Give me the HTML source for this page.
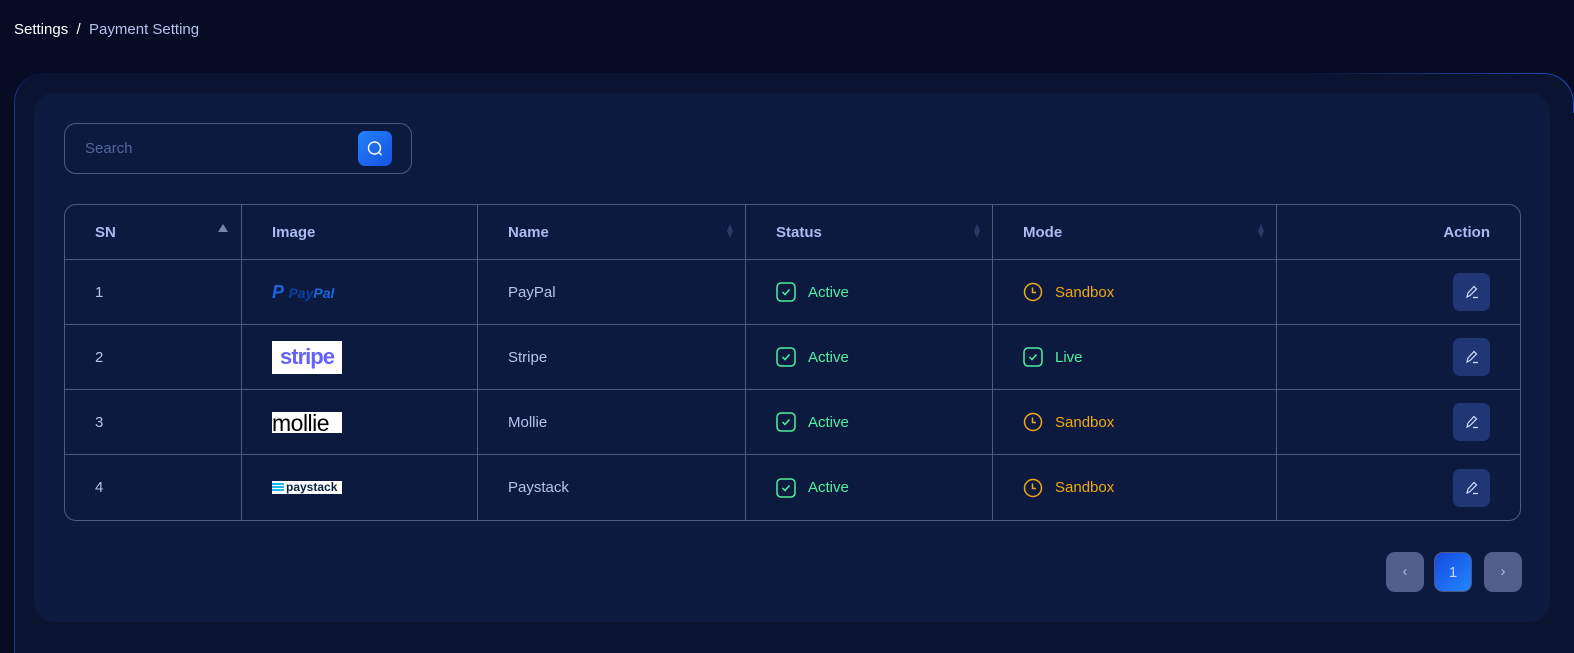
<!DOCTYPE html>
<html><head><meta charset="utf-8"><style>
*{box-sizing:border-box;margin:0;padding:0}
html,body{width:1574px;height:653px;overflow:hidden}
body{background:#050c24;font-family:"Liberation Sans",sans-serif;position:relative}
.bc{position:absolute;left:14px;top:21px;font-size:15px;color:#fff}
.bc span{color:#b4c2ec}
.outer{position:absolute;left:14px;top:73px;width:1560px;height:580px;background:#0a1330;border-top-left-radius:30px;border-top-right-radius:30px;border-left:1px solid #1a3690}
.tr{position:absolute;left:1300px;top:73px;width:274px;height:40px;border-top:1px solid #2050c0;border-right:1px solid #2050c0;border-top-right-radius:30px;-webkit-mask:linear-gradient(90deg,transparent,#000);mask:linear-gradient(90deg,transparent,#000)}
.card{position:absolute;left:34px;top:93px;width:1516px;height:529px;background:#0d1a40;border-radius:20px}
.search{position:absolute;left:64px;top:123px;width:348px;height:51px;border:1px solid #4b5b86;border-radius:12px}
.search .ph{position:absolute;left:20px;top:16px;font-size:15px;color:#52659a}
.search .btn{position:absolute;left:293px;top:7px;width:34px;height:35px;border-radius:7px;background:linear-gradient(135deg,#2480ff,#1652e0)}
table{position:absolute;left:64px;top:204px;width:1457px;border-collapse:separate;border-spacing:0;border:1px solid #4b5b86;border-radius:12px;font-size:15px;color:#b4c2ec}
td,th{border-right:1px solid #4b5b86;border-bottom:1px solid #4b5b86;padding:0 30px;text-align:left;position:relative}
th{height:55px;font-weight:bold;color:#a9bbf0}
td{height:65px}
tr:last-child td{border-bottom:none}
td:last-child,th:last-child{border-right:none;text-align:right;padding-right:30px}
.srt{position:absolute;right:12px;top:19px;width:6px;height:14px;background:#2a3a66;clip-path:polygon(50% 0,100% 50%,50% 100%,0 50%)}
.up{position:absolute;right:13px;top:19px;width:0;height:0;border-left:5px solid transparent;border-right:5px solid transparent;border-bottom:8px solid #7886ad}
.st{display:flex;align-items:center;gap:12px}
.g{color:#4ef0a0}.o{color:#f0a812}
.ed{display:inline-block;width:37px;height:38px;border-radius:7px;background:#213675;vertical-align:middle;padding-top:11px;text-align:center}
.pg{position:absolute;top:552px;width:38px;height:40px;border-radius:9px;background:#505e8a;color:#a9bbf0;text-align:center;line-height:40px;font-size:15px}
</style></head><body>
<div class="bc">Settings &nbsp;/ &nbsp;<span>Payment Setting</span></div>
<div class="outer"></div>
<div class="tr"></div>
<div class="card"></div>
<div class="search"><div class="ph">Search</div><div class="btn"><svg width="34" height="35" viewBox="0 0 34 35"><circle cx="16.5" cy="17" r="6" fill="none" stroke="#fff" stroke-width="1.4"/><path d="M21 21.5l2.5 2.5" stroke="#fff" stroke-width="1.4"/></svg></div></div>
<table>
<tr><th style="width:177px">SN<span class="up"></span></th><th style="width:236px">Image</th><th style="width:268px">Name<span class="srt"></span></th><th style="width:247px">Status<span class="srt"></span></th><th style="width:284px">Mode<span class="srt"></span></th><th>Action</th></tr>
<tr><td>1</td><td><span style="color:#0d3fa0;font-weight:bold;font-style:italic;font-size:16px"><span style="color:#1a66e0;font-size:18px">P</span> <span style="font-size:14px">Pay<b style="color:#1a66e0">Pal</b></span></span></td><td>PayPal</td><td><div class="st g"><svg width="20" height="20"><rect x="1" y="1" width="18" height="18" rx="4" fill="none" stroke="#4ef0a0" stroke-width="1.5"/><path d="M6.5 10l2.5 2.5 4.5-5" fill="none" stroke="#4ef0a0" stroke-width="1.5"/></svg>Active</div></td><td><div class="st o"><svg width="20" height="20"><circle cx="10" cy="10" r="8.5" fill="none" stroke="#f0a812" stroke-width="1.5"/><path d="M9.5 5.5v5h3.5" fill="none" stroke="#f0a812" stroke-width="1.5"/></svg>Sandbox</div></td><td><span class="ed"><svg width="16" height="16"><path d="M3 13l1-4 6-6.5 2.5 2.5-6.5 6.5z M9 13.5h5" fill="none" stroke="#d8e0ff" stroke-width="1.2"/></svg></span></td></tr>
<tr><td>2</td><td><div style="width:70px;height:33px;background:#fff;color:#6461fc;font-weight:bold;font-size:22px;text-align:center;line-height:31px;letter-spacing:-1px">stripe</div></td><td>Stripe</td><td><div class="st g"><svg width="20" height="20"><rect x="1" y="1" width="18" height="18" rx="4" fill="none" stroke="#4ef0a0" stroke-width="1.5"/><path d="M6.5 10l2.5 2.5 4.5-5" fill="none" stroke="#4ef0a0" stroke-width="1.5"/></svg>Active</div></td><td><div class="st g"><svg width="20" height="20"><rect x="1" y="1" width="18" height="18" rx="4" fill="none" stroke="#4ef0a0" stroke-width="1.5"/><path d="M6.5 10l2.5 2.5 4.5-5" fill="none" stroke="#4ef0a0" stroke-width="1.5"/></svg>Live</div></td><td><span class="ed"><svg width="16" height="16"><path d="M3 13l1-4 6-6.5 2.5 2.5-6.5 6.5z M9 13.5h5" fill="none" stroke="#d8e0ff" stroke-width="1.2"/></svg></span></td></tr>
<tr><td>3</td><td><div style="width:70px;height:21px;background:#fff;color:#000;font-size:23px;line-height:21px;letter-spacing:-0.5px;overflow:hidden;padding-top:1px">mollie</div></td><td>Mollie</td><td><div class="st g"><svg width="20" height="20"><rect x="1" y="1" width="18" height="18" rx="4" fill="none" stroke="#4ef0a0" stroke-width="1.5"/><path d="M6.5 10l2.5 2.5 4.5-5" fill="none" stroke="#4ef0a0" stroke-width="1.5"/></svg>Active</div></td><td><div class="st o"><svg width="20" height="20"><circle cx="10" cy="10" r="8.5" fill="none" stroke="#f0a812" stroke-width="1.5"/><path d="M9.5 5.5v5h3.5" fill="none" stroke="#f0a812" stroke-width="1.5"/></svg>Sandbox</div></td><td><span class="ed"><svg width="16" height="16"><path d="M3 13l1-4 6-6.5 2.5 2.5-6.5 6.5z M9 13.5h5" fill="none" stroke="#d8e0ff" stroke-width="1.2"/></svg></span></td></tr>
<tr><td>4</td><td><div style="width:70px;height:13px;background:#fff;color:#0b2140;font-weight:bold;font-size:12px;line-height:13px;padding-left:14px;position:relative"><span style="position:absolute;left:0;top:2px;width:12px;height:9px;background:repeating-linear-gradient(#1fb6f0 0 2px,#fff 2px 3px)"></span>paystack</div></td><td>Paystack</td><td><div class="st g"><svg width="20" height="20"><rect x="1" y="1" width="18" height="18" rx="4" fill="none" stroke="#4ef0a0" stroke-width="1.5"/><path d="M6.5 10l2.5 2.5 4.5-5" fill="none" stroke="#4ef0a0" stroke-width="1.5"/></svg>Active</div></td><td><div class="st o"><svg width="20" height="20"><circle cx="10" cy="10" r="8.5" fill="none" stroke="#f0a812" stroke-width="1.5"/><path d="M9.5 5.5v5h3.5" fill="none" stroke="#f0a812" stroke-width="1.5"/></svg>Sandbox</div></td><td><span class="ed"><svg width="16" height="16"><path d="M3 13l1-4 6-6.5 2.5 2.5-6.5 6.5z M9 13.5h5" fill="none" stroke="#d8e0ff" stroke-width="1.2"/></svg></span></td></tr>
</table>
<div class="pg" style="left:1386px">‹</div>
<div class="pg" style="left:1434px;background:linear-gradient(135deg,#1548e0,#2288ff);border:1px solid #4b5b86;color:#c8d4ff">1</div>
<div class="pg" style="left:1484px">›</div>
</body></html>
